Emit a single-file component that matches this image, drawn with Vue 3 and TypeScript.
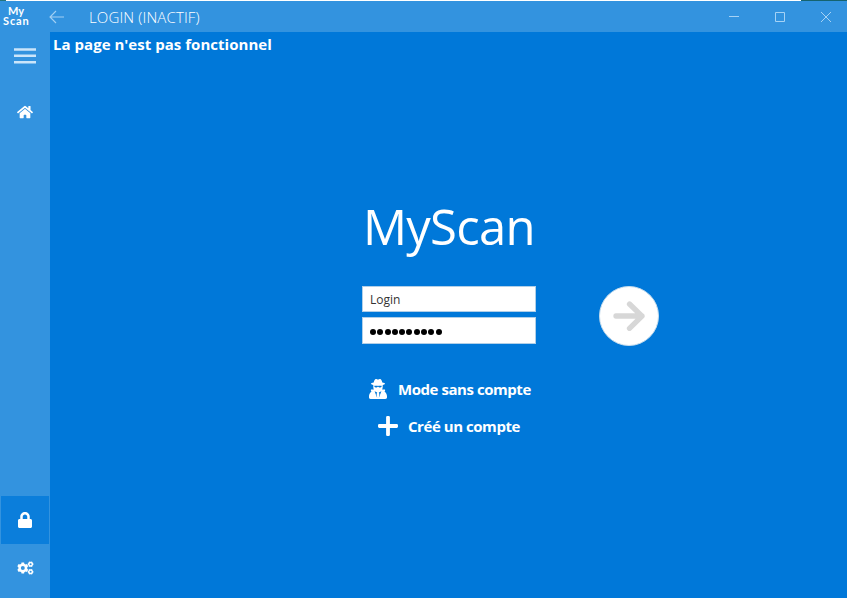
<script setup lang="ts">
import { ref } from 'vue'

const login = ref('Login')
const passwordLength = 10

function gear(cx: number, cy: number, outer: number, inner: number, teeth: number, turn: number): string {
  const points: string[] = []
  const step = (Math.PI * 2) / teeth
  for (let i = 0; i < teeth; i++) {
    const corners: [number, number][] = [[-0.33, inner], [-0.22, outer], [0.22, outer], [0.33, inner]]
    for (const [offset, radius] of corners) {
      const angle = turn + (i + offset) * step
      points.push(`${(cx + radius * Math.cos(angle)).toFixed(2)} ${(cy + radius * Math.sin(angle)).toFixed(2)}`)
    }
  }
  const hole = outer * 0.35
  return `M${points.join('L')}ZM${cx - hole} ${cy}a${hole} ${hole} 0 1 0 ${hole * 2} 0a${hole} ${hole} 0 1 0 ${-hole * 2} 0Z`
}

const gears = [
  gear(5.8, 7, 5.7, 4.5, 6, Math.PI / 6),
  gear(13.6, 3.2, 2.9, 2.5, 6, 0),
  gear(13.6, 10.8, 2.9, 2.5, 6, 0),
].join('')
</script>

<template>
  <div class="window">
    <div class="backdrop"><i class="edge-left"></i><i class="edge-right"></i></div>
    <header class="titlebar">
      <div class="logo"><span class="my">My</span><span class="scan">Scan</span></div>
      <svg class="back" width="16" height="14" viewBox="0 0 16 14"><path d="M15 7H1.2M7 1L1 7l6 6" /></svg>
      <h1>LOGIN (INACTIF)</h1>
      <div class="controls">
        <svg width="46" height="31" viewBox="0 0 46 31"><path d="M18 15.500h10" /></svg>
        <svg width="46" height="31" viewBox="0 0 46 31"><path d="M18.500 11.500h9v9h-9z" /></svg>
        <svg width="46" height="31" viewBox="0 0 46 31"><path d="M18 11l10 10M28 11L18 21" /></svg>
      </div>
    </header>
    <div class="body">
      <nav class="sidebar">
        <button class="item menu"><svg width="22" height="16" viewBox="0 0 22 16"><path d="M0 1.500h22M0 7.800h22M0 14.300h22" /></svg></button>
        <button class="item home">
          <svg width="16" height="14.200" viewBox="0 0 576 512"><path d="M280.37 148.26L96 300.11V464a16 16 0 0 0 16 16l112.06-.29a16 16 0 0 0 15.92-16V368a16 16 0 0 1 16-16h64a16 16 0 0 1 16 16v95.64a16 16 0 0 0 16 16.05L464 480a16 16 0 0 0 16-16V300L295.67 148.26a12.19 12.19 0 0 0-15.3 0zM571.6 251.47L488 182.56V44.05a12 12 0 0 0-12-12h-56a12 12 0 0 0-12 12v72.61L318.47 43a48 48 0 0 0-61 0L4.34 251.47a12 12 0 0 0-1.6 16.9l25.5 31A12 12 0 0 0 45.15 301l235.22-193.74a12.19 12.19 0 0 1 15.3 0L530.9 301a12 12 0 0 0 16.9-1.6l25.5-31a12 12 0 0 0-1.7-16.93z" /></svg>
        </button>
        <button class="item lock">
          <svg width="14" height="16" viewBox="0 0 448 512"><path d="M400 224h-24v-72C376 68.2 307.8 0 224 0S72 68.2 72 152v72H48c-26.5 0-48 21.5-48 48v192c0 26.5 21.5 48 48 48h352c26.5 0 48-21.5 48-48V272c0-26.5-21.5-48-48-48zm-104 0H152v-72c0-39.7 32.3-72 72-72s72 32.3 72 72v72z" /></svg>
        </button>
        <button class="item settings"><svg width="17" height="14" viewBox="0 0 17 14"><path fill-rule="evenodd" :d="gears" /></svg></button>
      </nav>
      <main class="page">
        <p class="notice">La page n'est pas fonctionnel</p>
        <h2>MyScan</h2>
        <form class="login" @submit.prevent>
          <div class="fields">
            <input v-model="login" type="text" />
            <div class="password"><i v-for="n in passwordLength" :key="n"></i></div>
          </div>
          <button class="submit"><svg width="60" height="60" viewBox="0 0 60 60"><path d="M17 30H43M30.500 18L43 30.200 30.500 42.300" /></svg></button>
        </form>
        <a class="link guest">
          <svg width="18" height="20" viewBox="0 0 18 20">
            <path d="M4.700 3.500C5.200 1.500 5.900 0 6.900 0c.8 0 1.300.6 2.100.6S10.300 0 11.100 0c1 0 1.700 1.500 2.200 3.500 1.500.3 2.700.7 2.700 1.200s-1.200.9-2.300 1.200v2.200c0 1-.2 1.800-.6 2.400h2.400c.5 0 .8.4.6.9l-.5 1.300c1.500 1 2.400 2.600 2.400 4.500v1c0 1-.6 1.700-1.700 1.700H1.700C.6 20 0 19.300 0 18.300v-1c0-1.900.9-3.500 2.400-4.500l-.5-1.300c-.2-.5.1-.9.600-.9h2.400c-.4-.6-.6-1.400-.6-2.400V5.900C3.200 5.600 2 5.200 2 4.700s1.200-.9 2.700-1.200z" />
            <path class="cut" d="M5.300 6.800h3.200l.5.300.5-.3h3.200c0 1.300-.5 1.700-1.500 1.700S9.600 8.200 9 7.500C8.400 8.200 7.800 8.500 6.800 8.500S5.300 8.100 5.300 6.800zM5.600 12.300l2.600 1.300-.6 1.300.6 4.100zM12.400 12.300l-2.600 1.300.6 1.300-.6 4.100z" />
          </svg>
          <span>Mode sans compte</span>
        </a>
        <a class="link create">
          <svg width="20" height="20" viewBox="0 0 20 20"><path d="M8.100 1.300Q8.100 0 9.400 0h1.200q1.300 0 1.300 1.300v6.800h6.800q1.300 0 1.300 1.300v1.200q0 1.300-1.300 1.300h-6.800v6.800q0 1.300-1.300 1.300H9.400q-1.300 0-1.300-1.300v-6.800H1.300Q0 11.900 0 10.600V9.400q0-1.300 1.300-1.300h6.800z" /></svg>
          <span>Créé un compte</span>
        </a>
      </main>
    </div>
  </div>
</template>

<style>
body {
  overflow: hidden;
}
</style>

<style scoped>
* {
  box-sizing: border-box;
}
.window {
  width: 847px;
  height: 598px;
  display: flex;
  flex-direction: column;
  background: #3393df;
  color: #fff;
  font-family: "Open Sans", "Noto Sans", sans-serif;
}
.backdrop {
  height: 1px;
  display: flex;
  justify-content: space-between;
  background: #fff;
}
.edge-left {
  width: 6px;
  background: #23747d;
}
.edge-right {
  width: 46px;
  background: #15636f;
}
.titlebar {
  height: 31px;
  display: flex;
  flex: none;
}
.logo {
  width: 49px;
  padding: 5px 0 0 3px;
  font-family: "Lato", sans-serif;
  font-weight: 700;
  display: flex;
  flex-direction: column;
  line-height: 10px;
}
.my {
  font-size: 11px;
  padding-left: 5px;
}
.scan {
  font-size: 11px;
  letter-spacing: 0.9px;
}
.back {
  margin-top: 9px;
  fill: none;
  stroke: #a3d0f3;
  stroke-width: 1.1;
}
h1 {
  margin: 0 0 0 24px;
  font-size: 15px;
  font-weight: 300;
  line-height: 33px;
  letter-spacing: 0.13px;
  white-space: nowrap;
}
.controls {
  display: flex;
  margin-left: auto;
  margin-right: -2px;
}
.controls svg {
  fill: none;
  stroke: #a5d2f5;
  stroke-width: 1;
}
.body {
  flex: 1;
  display: flex;
}
.sidebar {
  width: 50px;
  display: flex;
  flex-direction: column;
}
button {
  border: 0;
  padding: 0;
  background: none;
  color: inherit;
}
.item {
  width: 49px;
  height: 48px;
  display: flex;
  align-items: center;
  justify-content: center;
  flex: none;
}
.item svg {
  fill: #fff;
}
.menu svg {
  stroke: #cbe5fa;
  stroke-width: 2.4;
}
.home {
  margin-top: 8px;
}
.lock {
  margin: auto 0 0 1px;
  width: 48px;
  background: #0b7edb;
}
.settings {
  width: 50px;
  margin-bottom: 6px;
}
.page {
  flex: 1;
  background: #0078d9;
  display: flex;
  flex-direction: column;
  align-items: flex-start;
}
.notice {
  margin: 0 0 0 3px;
  font-size: 15px;
  line-height: 24px;
  font-weight: 700;
  letter-spacing: 0.03px;
  white-space: nowrap;
}
h2 {
  margin: 134px 0 0 313px;
  font-size: 49px;
  font-weight: 400;
  line-height: 72px;
  letter-spacing: -0.75px;
}
.login {
  margin: 24px 0 0 312px;
  display: flex;
}
.fields {
  width: 174px;
  display: flex;
  flex-direction: column;
  gap: 5px;
}
input,
.password {
  width: 174px;
  height: 26px;
  background: #fff;
  border: 1px solid #b1cfe8;
  padding: 0 7px;
}
input {
  font: 12px "Open Sans", sans-serif;
  color: #333;
  border-radius: 0;
}
.password {
  height: 27px;
  display: flex;
  align-items: center;
  gap: 1.3px;
  padding-top: 3px;
}
.password i {
  width: 6px;
  height: 6px;
  border-radius: 50%;
  background: #000;
}
.submit {
  margin-left: 63px;
  width: 60px;
  height: 60px;
  border-radius: 50%;
  border: 1px solid #c5dced;
  background: #fff;
  display: flex;
  align-items: center;
  justify-content: center;
}
.submit svg {
  flex: none;
  fill: none;
  stroke: #d7d7d7;
  stroke-width: 5.3;
  stroke-linecap: round;
  stroke-linejoin: round;
}
.link {
  display: flex;
  align-items: center;
  font-size: 15px;
  line-height: 20px;
  font-weight: 700;
  letter-spacing: -0.45px;
  white-space: nowrap;
}
.link svg {
  fill: #fff;
}
.link .cut {
  fill: #0078d9;
}
.guest {
  margin: 33px 0 0 319px;
  gap: 11px;
}
.create {
  margin: 17px 0 0 328px;
  gap: 10px;
}
</style>
